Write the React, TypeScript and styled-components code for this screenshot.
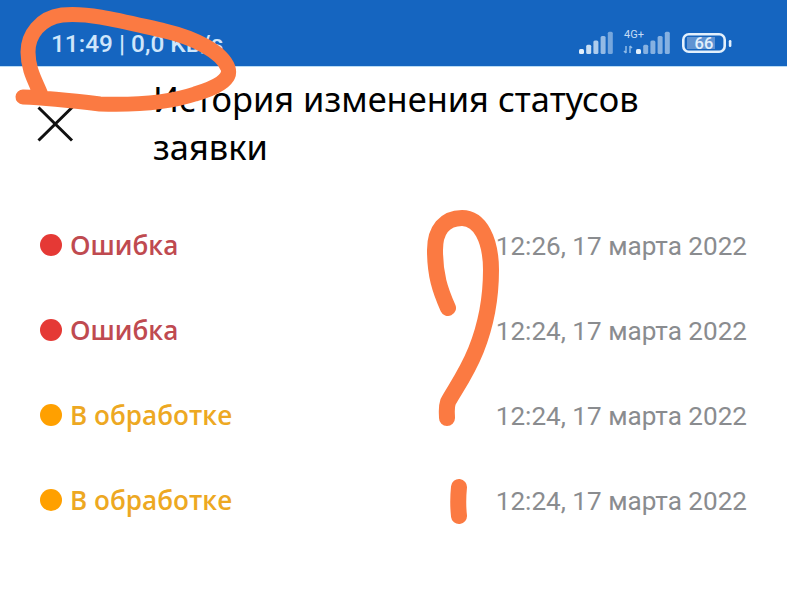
import React from "react";
import styled, { createGlobalStyle } from "styled-components";

const Global = createGlobalStyle`
  html, body { margin: 0; padding: 0; background: #fff; }
  body { width: 787px; height: 600px; overflow: hidden; }
`;

const Screen = styled.div`
  position: relative;
  width: 787px;
  height: 600px;
  background: #fff;
  overflow: hidden;
`;

const StatusBar = styled.header`
  height: 67px;
  background: #1565c0;
  display: flex;
  align-items: center;
  justify-content: space-between;
  padding: 0 55px 0 51px;
  border-bottom: 1px solid #b9dcf5;
  box-sizing: border-box;
`;

const Clock = styled.span`
  font: 500 24.4px/1 Roboto, sans-serif;
  color: #cfe6fb;
  margin-top: 22px;
`;

const Indicators = styled.div`
  display: flex;
  align-items: center;
  margin-top: 20px;
  line-height: 0;
`;

const TitleRow = styled.div`
  display: flex;
  padding: 8px 100px 0 37px;
`;

const CloseButton = styled.div`
  width: 116px;
  flex: none;
  padding-top: 30px;
  line-height: 0;
`;

const Title = styled.h1`
  margin: 0;
  font: 400 34.4px/48px "Noto Sans", sans-serif;
  color: #000;
`;

const History = styled.ul`
  list-style: none;
  margin: 32px 40px 0 40px;
  padding: 0;
`;

const Row = styled.li`
  height: 85px;
  display: flex;
  align-items: center;
  justify-content: space-between;
`;

const Status = styled.span<{ $kind: "error" | "pending" }>`
  display: flex;
  align-items: center;
  gap: 8px;
  font: 600 26.1px/1 "Open Sans", sans-serif;
  color: ${(p) => (p.$kind === "error" ? "#bf4a50" : "#eda822")};
`;

const Dot = styled.i<{ $kind: "error" | "pending" }>`
  width: 22px;
  height: 22px;
  border-radius: 50%;
  margin-top: -2px;
  background: ${(p) => (p.$kind === "error" ? "#e53935" : "#ffa000")};
`;

const Stamp = styled.time`
  font: 400 26.1px/1 Roboto, sans-serif;
  color: #8a8c8f;
  padding-top: 2px;
`;

const Scribble = styled.svg`
  position: absolute;
  inset: 0;
  pointer-events: none;
`;

const rows = [
  { kind: "error", label: "Ошибка", time: "12:26, 17 марта 2022" },
  { kind: "error", label: "Ошибка", time: "12:24, 17 марта 2022" },
  { kind: "pending", label: "В обработке", time: "12:24, 17 марта 2022" },
  { kind: "pending", label: "В обработке", time: "12:24, 17 марта 2022" },
] as const;

export default function App() {
  return (
    <Screen>
      <Global />
      <StatusBar>
        <Clock>11:49 | 0,0 KB/s</Clock>
        <Indicators>
          <svg width="153" height="40" viewBox="0 0 153 40">
            <g fill="#e3f0fc">
              {[0, 1, 2, 3, 4].map((i) => (
                <rect key={i} x={0 + i * 7.2} y={31 - (5 + i * 4.3)} width="5" height={5 + i * 4.3} rx="1.5" opacity={1 - i * 0.13} />
              ))}
              {[0, 1, 2, 3, 4].map((i) => (
                <rect key={i} x={57 + i * 7.2} y={31 - (5 + i * 4.3)} width="5" height={5 + i * 4.3} rx="1.5" opacity={i === 0 ? 1 : 0.55} />
              ))}
              <text x="45" y="15" fontFamily="Roboto, sans-serif" fontSize="11" fill="#c5dcf5">4G+</text>
              <path d="M47 23v7M45 28l2 2M51 30v-7M51 23l2 2" stroke="#8fbbe8" strokeWidth="1.5" fill="none" />
              <rect x="104.3" y="11.3" width="41.4" height="17.4" rx="5.5" fill="none" stroke="#e3f0fc" strokeWidth="2.6" />
              <rect x="108" y="14" width="28" height="12" fill="#5f93d2" />
              <text x="125" y="26" textAnchor="middle" fontFamily="Roboto, sans-serif" fontWeight="500" fontSize="16.5" fill="#e3f0fc">66</text>
              <rect x="149.8" y="17" width="2.6" height="7" rx="1.2" />
            </g>
          </svg>
        </Indicators>
      </StatusBar>
      <TitleRow>
        <CloseButton>
          <svg width="38" height="38" viewBox="0 0 38 38">
            <path d="M1.5 2.5 35 35.5M35.5 2 1.5 35.5" stroke="#111" strokeWidth="3" fill="none" />
          </svg>
        </CloseButton>
        <Title>История изменения статусов заявки</Title>
      </TitleRow>
      <History>
        {rows.map((r, i) => (
          <Row key={i}>
            <Status $kind={r.kind}>
              <Dot $kind={r.kind} />
              {r.label}
            </Status>
            <Stamp>{r.time}</Stamp>
          </Row>
        ))}
      </History>
      <Scribble width="787" height="600" viewBox="0 0 787 600" fill="none" stroke="#fb7a42" strokeLinecap="round" strokeLinejoin="round">
        <path
          strokeWidth="15"
          d="M23 97C50 98 75 101 100 104C130 105 165 104 195 94C215 88 232 80 228 68C222 52 195 38 165 31C125 22 90 12 62 15C40 18 28 35 28 52C28 70 36 82 41 95"
        />
        <path
          strokeWidth="16"
          d="M448 308C440 290 435 275 435 250C435 230 445 218 462 218C480 218 491 240 491 270C491 300 486 325 476 350C466 375 453 392 448 402C446 408 447 413 447 418"
        />
        <path strokeWidth="16" d="M459 487C458 497 458 507 459 516" />
      </Scribble>
    </Screen>
  );
}
